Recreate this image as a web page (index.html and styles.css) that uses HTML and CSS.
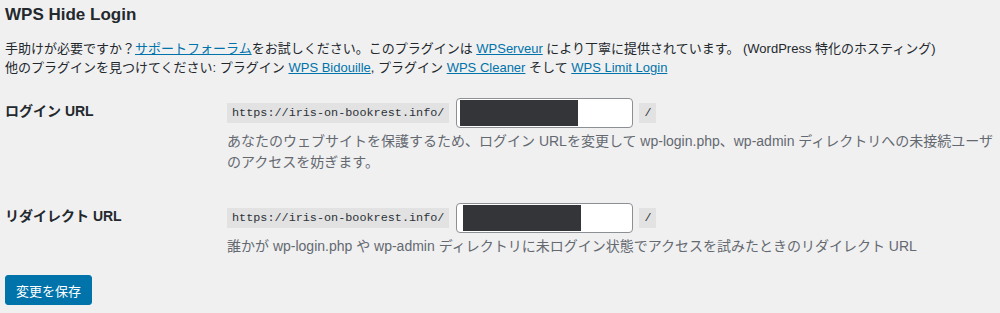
FILE: index.html
```html
<!DOCTYPE html>
<html lang="ja">
<head>
    <meta charset="UTF-8">
    <meta name="viewport" content="width=device-width, initial-scale=1.0">
    <title>WPS Hide Login</title>
    <link rel="stylesheet" href="styles.css">
</head>
<body>
    <div class="wrap">
        <h2 class="title">WPS Hide Login</h2>
        <p class="intro">
            手助けが必要ですか？<a href="#">サポートフォーラム</a>をお試しください。このプラグインは <a href="#">WPServeur</a> により丁寧に提供されています。 (WordPress 特化のホスティング)<br>
            他のプラグインを見つけてください: プラグイン <a href="#">WPS Bidouille</a>, プラグイン <a href="#">WPS Cleaner</a> そして <a href="#">WPS Limit Login</a>
        </p>

        <table class="form-table">
            <tr>
                <th><label for="whl_page">ログイン URL</label></th>
                <td>
                    <div class="url-field">
                        <code>https://iris-on-bookrest.info/</code>
                        <div class="input-box">
                            <input type="text" id="whl_page" value="">
                            <span class="redact"></span>
                        </div>
                        <code>/</code>
                    </div>
                    <p class="description">あなたのウェブサイトを保護するため、ログイン URLを変更して wp-login.php、wp-admin ディレクトリへの未接続ユーザのアクセスを妨ぎます。</p>
                </td>
            </tr>
            <tr>
                <th><label for="whl_redirect">リダイレクト URL</label></th>
                <td>
                    <div class="url-field">
                        <code>https://iris-on-bookrest.info/</code>
                        <div class="input-box">
                            <input type="text" id="whl_redirect" value="">
                            <span class="redact redact-wide"></span>
                        </div>
                        <code>/</code>
                    </div>
                    <p class="description">誰かが wp-login.php や wp-admin ディレクトリに未ログイン状態でアクセスを試みたときのリダイレクト URL</p>
                </td>
            </tr>
        </table>

        <p class="submit">
            <button class="button-primary" type="submit">変更を保存</button>
        </p>
    </div>
</body>
</html>
```

FILE: styles.css
```css
body {
    margin: 0;
    background-color: #f0f0f1;
    color: #23282d;
    font-family: "Liberation Sans", "Noto Sans CJK JP", sans-serif;
    font-size: 13px;
}
.wrap {
    padding: 0 5px;
    width: 1000px;
    box-sizing: border-box;
}
.title {
    margin: 0;
    padding-top: 4px;
    font-size: 17px;
    font-weight: 600;
    line-height: 22px;
}
.intro {
    margin: 13px 0 6px;
    line-height: 19px;
}
a {
    color: #0073aa;
}
.form-table {
    border-collapse: collapse;
    width: 100%;
}
.form-table th {
    width: 212px;
    padding: 19px 10px 19px 0;
    text-align: left;
    vertical-align: top;
    font-size: 14px;
    font-weight: 600;
    line-height: 18px;
}
.form-table td {
    padding: 15px 0 15px 0;
    vertical-align: top;
}
.url-field {
    display: flex;
    align-items: center;
    gap: 6px;
}
code {
    background-color: #e2e2e3;
    padding: 3px 5px 2px;
    font-family: "Liberation Mono", monospace;
    font-size: 11.8px;
    line-height: 15px;
    color: #2c3338;
}
.input-box {
    position: relative;
    margin-left: 1px;
}
.input-box input {
    display: block;
    width: 177px;
    height: 30px;
    box-sizing: border-box;
    border: 1px solid #8c8f94;
    border-radius: 4px;
    background: #fff;
    margin: 0;
}
.redact {
    position: absolute;
    left: 4px;
    top: 2px;
    width: 118px;
    height: 26px;
    background-color: #333538;
}
.redact-wide {
    left: 7px;
}
.description {
    margin: 3px 0 0;
    color: #646970;
    font-size: 14px;
    line-height: 21px;
}
.submit {
    margin: 3px 0 0;
}
.button-primary {
    background-color: #0073aa;
    color: #fff;
    border: 1px solid #0073aa;
    border-radius: 3px;
    height: 30px;
    padding: 0 10px;
    white-space: nowrap;
    font-family: "Liberation Sans", "Noto Sans CJK JP", sans-serif;
    font-size: 13px;
    cursor: pointer;
}
```
